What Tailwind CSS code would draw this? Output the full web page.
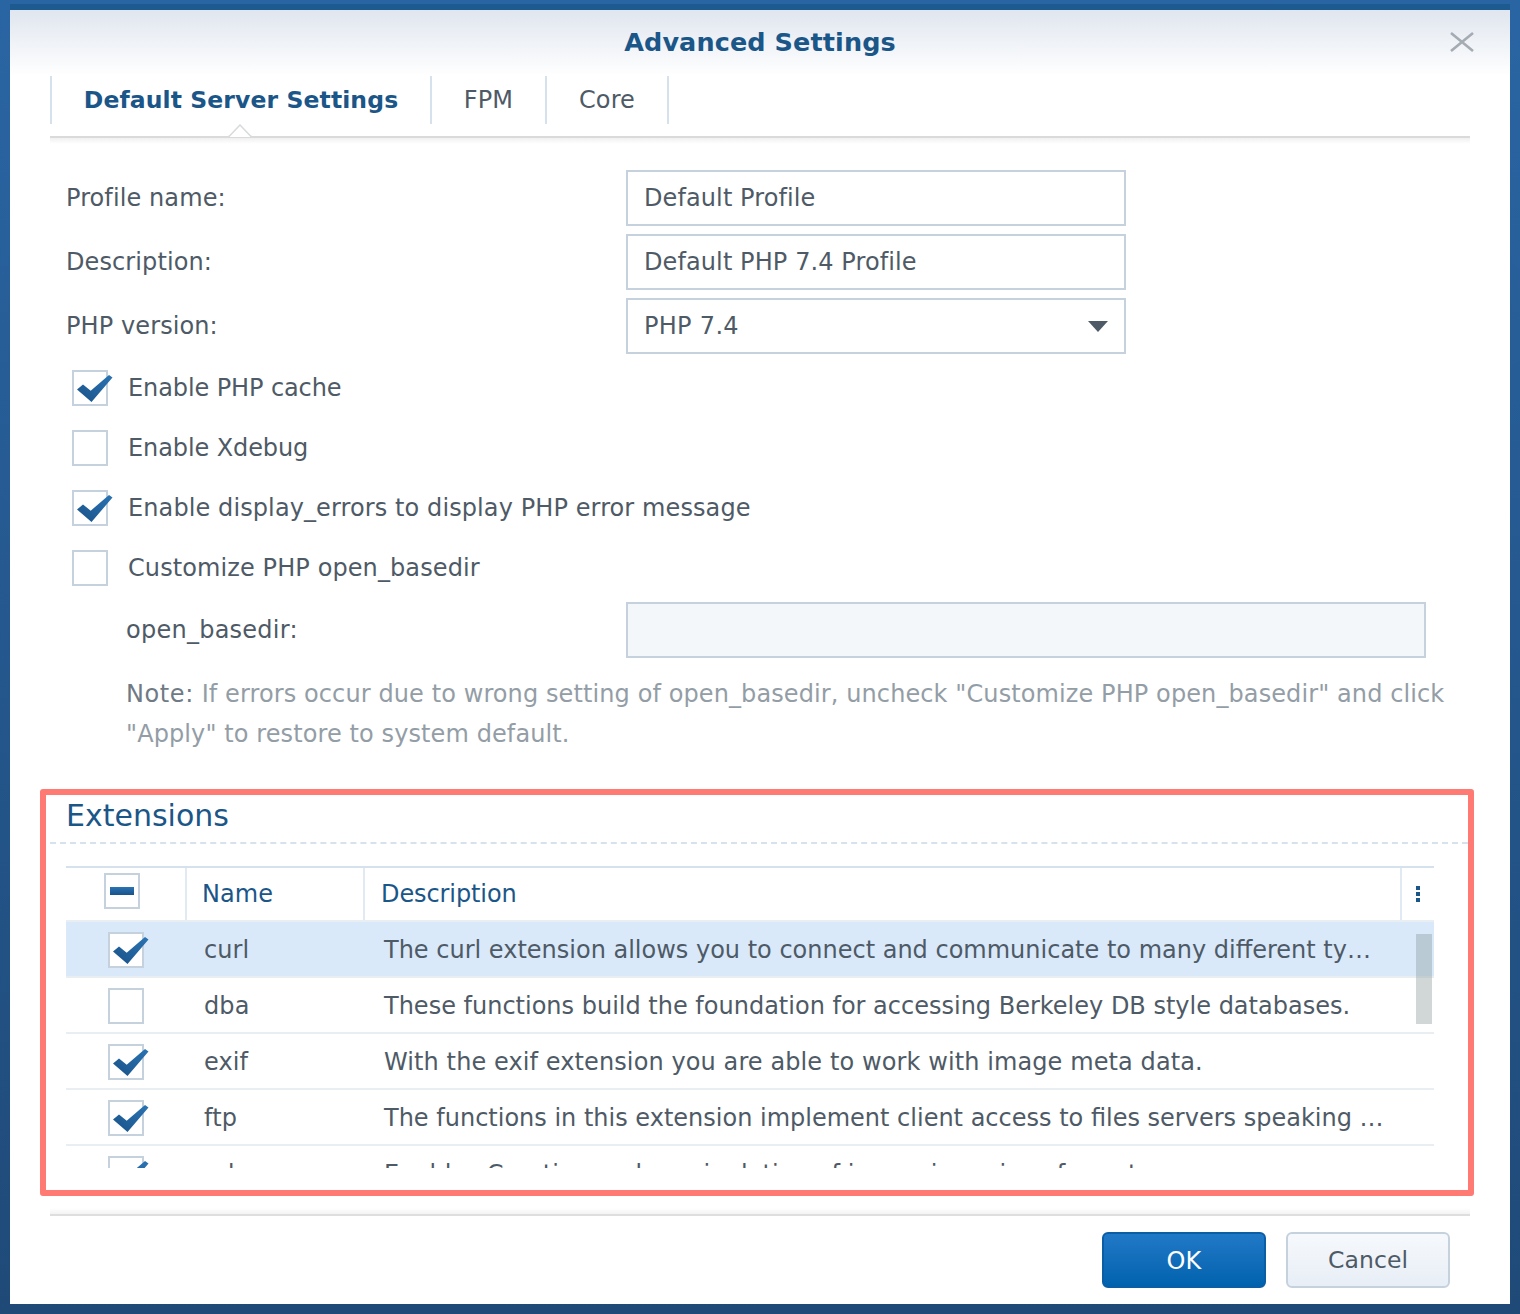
<!DOCTYPE html>
<html lang="en">
<head>
  <meta charset="UTF-8" />
  <title>Advanced Settings</title>
  <script src="https://cdn.jsdelivr.net/npm/@tailwindcss/browser@4"></script>
</head>
<body class="w-[1520px] h-[1314px] overflow-hidden bg-gradient-to-b from-[#2a65a3] to-[#1f4a78] font-['DejaVu_Sans',sans-serif] text-[24px] tracking-[0.1px] text-[#4e5a66]">
  <svg class="absolute w-0 h-0">
    <defs>
      <linearGradient id="checkfill" x1="1" y1="0" x2="0" y2="1">
        <stop offset="0" stop-color="#2a74b4"/>
        <stop offset="1" stop-color="#1a5288"/>
      </linearGradient>
    </defs>
    <symbol id="check" viewBox="0 0 36 27">
      <path d="M0 14.5 L6 9.5 L13.7 15.7 L32 0 L35.5 2.5 L14.5 27 Z" fill="url(#checkfill)"/>
    </symbol>
  </svg>

  <div class="ml-[10px] mt-[10px] w-[1500px] h-[1294px] bg-white flex flex-col relative shadow-[0_-6px_0_#1c5a8f]">
    <!-- header -->
    <div class="h-[66px] shrink-0 bg-gradient-to-b from-[#e0e6ef] to-white flex items-center justify-center">
      <h1 class="text-[25.5px] font-bold text-[#1b5688] -mt-[1px]">Advanced Settings</h1>
    </div>
    <svg class="absolute right-[36px] top-[22px] w-[24px] h-[20px]" viewBox="0 0 24 20">
      <path d="M1 1 L23 19 M23 1 L1 19" stroke="#a4abb3" stroke-width="2.6" fill="none"/>
    </svg>

    <!-- tabs -->
    <div class="mx-[40px] h-[62px] shrink-0 relative border-b-2 border-[#d8dadc]">
      <div class="flex h-[48px]">
        <div class="w-[382px] pt-[1px] border-x-2 border-[#d5e1ec] flex items-center justify-center font-bold text-[23.5px] text-[#1b5688]">Default Server Settings</div>
        <div class="w-[115px] border-r-2 border-[#d5e1ec] flex items-center justify-center">FPM</div>
        <div class="w-[122px] border-r-2 border-[#d5e1ec] flex items-center justify-center">Core</div>
      </div>
      <svg class="absolute left-[178px] top-[48px] w-[24px] h-[13px]" viewBox="0 0 24 13">
        <path d="M0 13 L12 0 L24 13 Z" fill="#fff"/>
        <path d="M0 12.5 L1 12.5 L12 1 L23 12.5 L24 12.5" fill="none" stroke="#d8dadc" stroke-width="1.5"/>
      </svg>
      <div class="absolute left-0 right-0 top-[62px] h-[6px] bg-gradient-to-b from-[#f0f0f0] to-white"></div>
    </div>

    <!-- form -->
    <div class="pl-[56px] pt-[32px] flex flex-col">
      <div class="flex items-center h-[56px]">
        <label class="w-[560px]">Profile name:</label>
        <div class="w-[500px] h-[56px] border-2 border-[#c5d2de] flex items-center pl-[16px]">Default Profile</div>
      </div>
      <div class="flex items-center h-[56px] mt-[8px]">
        <label class="w-[560px]">Description:</label>
        <div class="w-[500px] h-[56px] border-2 border-[#c5d2de] flex items-center pl-[16px]">Default PHP 7.4 Profile</div>
      </div>
      <div class="flex items-center h-[56px] mt-[8px]">
        <label class="w-[560px]">PHP version:</label>
        <div class="w-[500px] h-[56px] border-2 border-[#c5d2de] flex items-center justify-between pl-[16px] pr-[16px] tracking-[0.3px]">
          PHP 7.4
          <svg class="w-[20px] h-[11px]" viewBox="0 0 20 11"><path d="M0 0 H20 L10 11 Z" fill="#4e5a66"/></svg>
        </div>
      </div>

      <div class="flex items-center h-[36px] mt-[16px] ml-[6px]">
        <div class="relative w-[36px] h-[36px] border-2 border-[#c5d2de]">
          <svg class="absolute left-[3px] top-[3px] w-[36px] h-[27px]"><use href="#check"/></svg>
        </div>
        <span class="ml-[20px] tracking-[-0.1px]">Enable PHP cache</span>
      </div>
      <div class="flex items-center h-[36px] mt-[24px] ml-[6px]">
        <div class="w-[36px] h-[36px] border-2 border-[#c5d2de]"></div>
        <span class="ml-[20px] tracking-[-0.1px]">Enable Xdebug</span>
      </div>
      <div class="flex items-center h-[36px] mt-[24px] ml-[6px]">
        <div class="relative w-[36px] h-[36px] border-2 border-[#c5d2de]">
          <svg class="absolute left-[3px] top-[3px] w-[36px] h-[27px]"><use href="#check"/></svg>
        </div>
        <span class="ml-[20px]">Enable display_errors to display PHP error message</span>
      </div>
      <div class="flex items-center h-[36px] mt-[24px] ml-[6px]">
        <div class="w-[36px] h-[36px] border-2 border-[#c5d2de]"></div>
        <span class="ml-[20px]">Customize PHP open_basedir</span>
      </div>

      <div class="flex items-center h-[56px] mt-[16px] ml-[60px]">
        <label class="w-[500px] tracking-[0.25px]">open_basedir:</label>
        <div class="w-[800px] h-[56px] border-2 border-[#c5d2de] bg-[#f4f7fa]"></div>
      </div>
      <p class="ml-[60px] mt-[16px] w-[1340px] leading-[40px] text-[#939da6]"><span class="text-[#6f7a85] tracking-[0.6px]">Note:</span> If errors occur due to wrong setting of open_basedir, uncheck "Customize PHP open_basedir" and click "Apply" to restore to system default.</p>
    </div>

    <!-- extensions, outlined in red -->
    <section class="ml-[30px] mt-[35px] w-[1434px] h-[407px] shrink-0 border-[6px] border-[#ff7a72] rounded-[3px] relative">
      <h2 class="ml-[20px] h-[47px] text-[30px] leading-[42px] tracking-normal text-[#1b5688]">Extensions</h2>
      <div class="ml-[4px] w-[1418px] border-t-2 border-dashed border-[#d7e2ec]"></div>
      <div class="ml-[20px] mt-[22px] w-[1368px]">
        <div class="flex h-[56px] border-t-2 border-b-2 border-t-[#d5e1ec] border-b-[#e9eef2] text-[#1b5688]">
          <div class="w-[121px] flex pl-[38px] pt-[5px] border-r-2 border-[#e1eaf3]">
            <div class="w-[36px] h-[36px] border-2 border-[#c5d2de] flex items-center justify-center">
              <div class="w-[24px] h-[8px] bg-gradient-to-b from-[#2a74b4] to-[#1a5288]"></div>
            </div>
          </div>
          <div class="w-[178px] flex items-center pl-[15px] border-r-2 border-[#e1eaf3]">Name</div>
          <div class="w-[1037px] flex items-center pl-[16px] border-r-2 border-[#e1eaf3] tracking-[-0.1px]">Description</div>
          <div class="flex-1 flex flex-col items-center justify-center gap-[2px]">
            <i class="block w-[4px] h-[4px] bg-[#1b5688]"></i><i class="block w-[4px] h-[4px] bg-[#1b5688]"></i><i class="block w-[4px] h-[4px] bg-[#1b5688]"></i>
          </div>
        </div>
        <div class="h-[246px] overflow-hidden relative">
          <div class="flex items-center h-[56px] pt-[2px] bg-[#d9e9fa] border-b-2 border-[#e9eef2]">
            <div class="w-[120px] pl-[42px]"><div class="relative w-[36px] h-[36px] border-2 border-[#c5d2de] bg-white"><svg class="absolute left-[3px] top-[3px] w-[36px] h-[27px]"><use href="#check"/></svg></div></div>
            <div class="w-[180px] pl-[18px]">curl</div>
            <div class="flex-1 pl-[18px] pr-[58px] whitespace-nowrap overflow-hidden text-ellipsis tracking-normal">The curl extension allows you to connect and communicate to many different types of servers</div>
          </div>
          <div class="flex items-center h-[56px] pt-[2px] border-b-2 border-[#e9eef2]">
            <div class="w-[120px] pl-[42px]"><div class="w-[36px] h-[36px] border-2 border-[#c5d2de]"></div></div>
            <div class="w-[180px] pl-[18px]">dba</div>
            <div class="flex-1 pl-[18px] pr-[50px] whitespace-nowrap overflow-hidden text-ellipsis tracking-normal">These functions build the foundation for accessing Berkeley DB style databases.</div>
          </div>
          <div class="flex items-center h-[56px] pt-[2px] border-b-2 border-[#e9eef2]">
            <div class="w-[120px] pl-[42px]"><div class="relative w-[36px] h-[36px] border-2 border-[#c5d2de]"><svg class="absolute left-[3px] top-[3px] w-[36px] h-[27px]"><use href="#check"/></svg></div></div>
            <div class="w-[180px] pl-[18px]">exif</div>
            <div class="flex-1 pl-[18px] pr-[50px] whitespace-nowrap overflow-hidden text-ellipsis">With the exif extension you are able to work with image meta data.</div>
          </div>
          <div class="flex items-center h-[56px] pt-[2px] border-b-2 border-[#e9eef2]">
            <div class="w-[120px] pl-[42px]"><div class="relative w-[36px] h-[36px] border-2 border-[#c5d2de]"><svg class="absolute left-[3px] top-[3px] w-[36px] h-[27px]"><use href="#check"/></svg></div></div>
            <div class="w-[180px] pl-[18px]">ftp</div>
            <div class="flex-1 pl-[18px] pr-[50px] whitespace-nowrap overflow-hidden text-ellipsis tracking-normal">The functions in this extension implement client access to files servers speaking the File Transfer Protocol</div>
          </div>
          <div class="flex items-center h-[56px] pt-[2px] border-b-2 border-[#e9eef2]">
            <div class="w-[120px] pl-[42px]"><div class="relative w-[36px] h-[36px] border-2 border-[#c5d2de]"><svg class="absolute left-[3px] top-[3px] w-[36px] h-[27px]"><use href="#check"/></svg></div></div>
            <div class="w-[180px] pl-[18px]">gd</div>
            <div class="flex-1 pl-[18px] pr-[50px] whitespace-nowrap overflow-hidden text-ellipsis">Enables Creation and manipulation of image in various formats.</div>
          </div>
          <div class="absolute left-[1350px] top-[12px] w-[16px] h-[90px] bg-[#8c9a9a]/40"></div>
        </div>
      </div>
    </section>

    <!-- footer -->
    <div class="mx-[40px] mt-[12px] h-[8px] shrink-0 border-b-2 border-[#dedede] bg-gradient-to-b from-white to-[#f3f3f3]"></div>
    <div class="flex justify-end gap-[20px] pr-[60px] pt-[16px]">
      <button class="w-[164px] h-[56px] pt-[1px] rounded-[6px] border-2 border-[#0a5ea6] bg-gradient-to-b from-[#2079c7] to-[#0062ad] text-white">OK</button>
      <button class="w-[164px] h-[56px] pt-[1px] rounded-[6px] border-2 border-[#c5d2de] bg-gradient-to-b from-[#f6f9fc] to-[#e8eef6] text-[23.5px] text-[#4e5a66]">Cancel</button>
    </div>
  </div>
</body>
</html>
